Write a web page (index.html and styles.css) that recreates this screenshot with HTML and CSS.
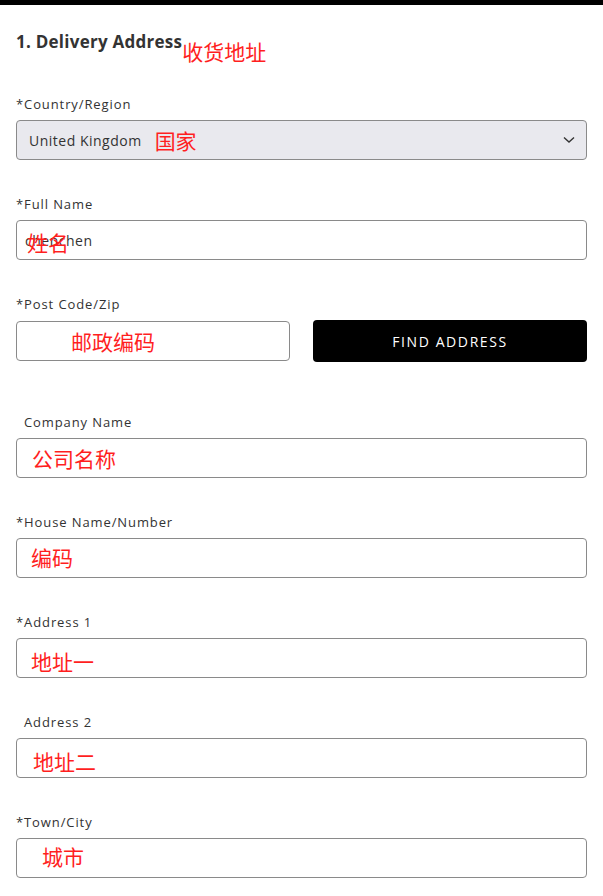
FILE: index.html
```html
<!DOCTYPE html>
<html lang="en">
<head>
<meta charset="UTF-8" />
<meta name="viewport" content="width=device-width, initial-scale=1" />
<title>Delivery Address</title>
<link rel="stylesheet" href="styles.css">
</head>
<body>

<div class="top-bar"></div>

<div class="form">
  <div class="form-title">
    <h1>1. Delivery Address</h1>
    <span class="note note-title">收货地址</span>
  </div>

  <div class="field">
    <label>*Country/Region</label>
    <div class="box select">
      <span class="value">United Kingdom</span>
      <span class="note note-country">国家</span>
      <svg class="chevron" width="12" height="8" viewBox="0 0 12 8"><path d="M1 1.5 L6 6 L11 1.5" fill="none" stroke="#333" stroke-width="1.4"/></svg>
    </div>
  </div>

  <div class="field">
    <label>*Full Name</label>
    <div class="box">
      <span class="value value-name">chenchen</span>
      <span class="note note-name">姓名</span>
    </div>
  </div>

  <div class="field field-post">
    <label>*Post Code/Zip</label>
    <div class="post-row">
      <div class="box post-box">
        <span class="note note-post">邮政编码</span>
      </div>
      <button class="find-btn">FIND ADDRESS</button>
    </div>
  </div>

  <div class="field field-company">
    <label class="optional">Company Name</label>
    <div class="box">
      <span class="note note-company">公司名称</span>
    </div>
  </div>

  <div class="field">
    <label>*House Name/Number</label>
    <div class="box">
      <span class="note note-house">编码</span>
    </div>
  </div>

  <div class="field">
    <label>*Address 1</label>
    <div class="box">
      <span class="note note-addr1">地址一</span>
    </div>
  </div>

  <div class="field">
    <label class="optional">Address 2</label>
    <div class="box">
      <span class="note note-addr2">地址二</span>
    </div>
  </div>

  <div class="field">
    <label>*Town/City</label>
    <div class="box">
      <span class="note note-town">城市</span>
    </div>
  </div>
</div>

</body>
</html>
```

FILE: styles.css
```css
/* Base */
body {
  margin: 0;
  font-family: 'Open Sans', 'Noto Sans CJK SC', sans-serif;
  color: #333;
  background: #fff;
}

.top-bar {
  height: 5px;
  background: #000;
}

.form {
  padding: 0 16px;
}

/* Title */
.form-title {
  display: flex;
  align-items: flex-start;
  margin-top: 25px;
  height: 66px;
}
.form-title h1 {
  margin: 0;
  font-size: 17px;
  line-height: 24px;
  letter-spacing: 0.25px;
  font-weight: 700;
  color: #333;
}

/* Red notes */
.note {
  font-family: 'Noto Sans CJK SC', sans-serif;
  color: #ff1f1f;
  font-size: 21px;
  line-height: 24px;
}
.note-title { margin-top: 9px; }
.note-country { margin-left: 13px; }
.note-name {
  position: absolute;
  left: 10px;
  top: 9px;
}
.note-post { margin-left: 54px; }
.note-company { margin-left: 15px; }
.note-house { margin-left: 14px; margin-top: -2px; }
.note-addr1 { margin-left: 14px; margin-top: 6px; }
.note-addr2 { margin-left: 16px; margin-top: 5px; }
.note-town { margin-left: 25px; margin-top: -4px; }

/* Fields */
.field {
  margin-bottom: 36px;
}
.field label {
  display: block;
  font-size: 13px;
  line-height: 16px;
  letter-spacing: 0.9px;
  color: #333;
  margin-bottom: 8px;
}
.field label.optional {
  padding-left: 8px;
}

.box {
  position: relative;
  display: flex;
  align-items: center;
  height: 40px;
  box-sizing: border-box;
  border: 1px solid #8a8a8a;
  border-radius: 4px;
  background: #fff;
}
.box .value {
  font-size: 14px;
  letter-spacing: 0.5px;
  color: #333;
  padding-left: 12px;
}
.value-name {
  padding-left: 8px !important;
}

.select {
  background: #e9e9ee;
}
.select .chevron {
  margin-left: auto;
  margin-right: 11px;
}

/* Post code row */
.field-post {
  margin-bottom: 52px;
}
.post-row {
  display: flex;
  align-items: center;
  gap: 23px;
}
.post-box {
  flex: 0 0 274px;
}
.find-btn {
  flex: 1;
  height: 42px;
  background: #000;
  color: #fff;
  border: none;
  border-radius: 4px;
  font-family: 'Open Sans', sans-serif;
  font-size: 14px;
  letter-spacing: 1.6px;
}
```
